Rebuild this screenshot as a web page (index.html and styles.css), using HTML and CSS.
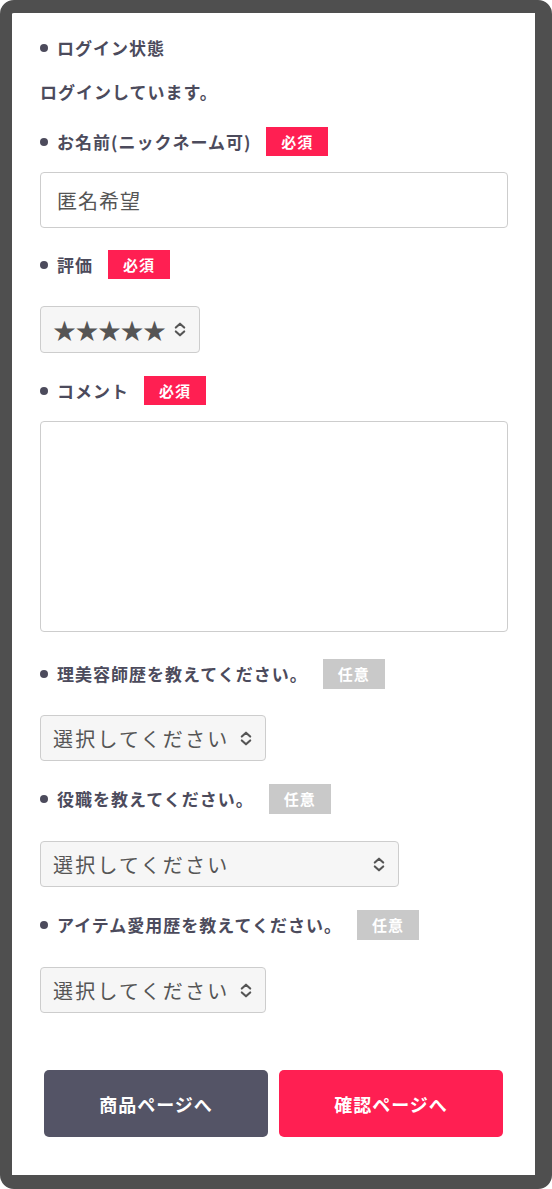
FILE: index.html
```html
<!DOCTYPE html>
<html lang="ja">
<head>
<meta charset="utf-8">
<title>レビュー投稿</title>
<link rel="stylesheet" href="styles.css">
</head>
<body>
<div class="frame">
  <form class="form">
    <div class="field field--info">
      <div class="label"><span class="dot"></span><span class="label-text">ログイン状態</span></div>
      <p class="status">ログインしています。</p>
    </div>

    <div class="field field--text">
      <div class="label"><span class="dot"></span><span class="label-text">お名前(ニックネーム可)</span><span class="badge badge--req">必須</span></div>
      <input class="input" type="text" value="匿名希望">
    </div>

    <div class="field field--select">
      <div class="label"><span class="dot"></span><span class="label-text">評価</span><span class="badge badge--req">必須</span></div>
      <div class="select select--stars"><span class="stars">★★★★★</span><svg class="chev" width="12" height="15" viewBox="0 0 12 15"><path d="M1.8 5.6 L6 1.7 L10.2 5.6 M1.8 9.4 L6 13.3 L10.2 9.4" fill="none" stroke="#555" stroke-width="2.1" stroke-linecap="round" stroke-linejoin="round"/></svg></div>
    </div>

    <div class="field field--text field--area">
      <div class="label"><span class="dot"></span><span class="label-text">コメント</span><span class="badge badge--req">必須</span></div>
      <textarea class="textarea"></textarea>
    </div>

    <div class="field field--select">
      <div class="label"><span class="dot"></span><span class="label-text">理美容師歴を教えてください。</span><span class="badge badge--opt">任意</span></div>
      <div class="select select--short"><span class="sel-text">選択してください</span><svg class="chev" width="12" height="15" viewBox="0 0 12 15"><path d="M1.8 5.6 L6 1.7 L10.2 5.6 M1.8 9.4 L6 13.3 L10.2 9.4" fill="none" stroke="#555" stroke-width="2.1" stroke-linecap="round" stroke-linejoin="round"/></svg></div>
    </div>

    <div class="field field--select">
      <div class="label"><span class="dot"></span><span class="label-text">役職を教えてください。</span><span class="badge badge--opt">任意</span></div>
      <div class="select select--wide"><span class="sel-text">選択してください</span><svg class="chev" width="12" height="15" viewBox="0 0 12 15"><path d="M1.8 5.6 L6 1.7 L10.2 5.6 M1.8 9.4 L6 13.3 L10.2 9.4" fill="none" stroke="#555" stroke-width="2.1" stroke-linecap="round" stroke-linejoin="round"/></svg></div>
    </div>

    <div class="field field--select field--last">
      <div class="label"><span class="dot"></span><span class="label-text">アイテム愛用歴を教えてください。</span><span class="badge badge--opt">任意</span></div>
      <div class="select select--short"><span class="sel-text">選択してください</span><svg class="chev" width="12" height="15" viewBox="0 0 12 15"><path d="M1.8 5.6 L6 1.7 L10.2 5.6 M1.8 9.4 L6 13.3 L10.2 9.4" fill="none" stroke="#555" stroke-width="2.1" stroke-linecap="round" stroke-linejoin="round"/></svg></div>
    </div>

    <div class="actions">
      <button type="button" class="btn btn--back">商品ページへ</button>
      <button type="button" class="btn btn--next">確認ページへ</button>
    </div>
  </form>
</div>
</body>
</html>
```

FILE: styles.css
```css
html, body {
  margin: 0;
  padding: 0;
  background: #ffffff;
}

body {
  font-family: "Noto Sans CJK JP", "Noto Sans", sans-serif;
  color: #4c4b5c;
}

.frame {
  box-sizing: border-box;
  width: 552px;
  height: 1189px;
  border-style: solid;
  border-color: #4f4f4f;
  border-width: 13px 17px 14px 12px;
  border-radius: 14px;
  background: #ffffff;
  padding: 20px 27px 0 28px;
}

.form {
  display: flex;
  flex-direction: column;
}

.field {
  display: flex;
  flex-direction: column;
  align-items: flex-start;
  margin-bottom: 23px;
}

.field--info {
  margin-bottom: 21px;
}

.field--text {
  margin-bottom: 22px;
}

.field--area {
  margin-bottom: 27px;
}

.field--last {
  margin-bottom: 57px;
}

.label {
  display: flex;
  align-items: center;
  height: 29px;
  font-size: 17px;
  font-weight: 700;
  letter-spacing: 1px;
  color: #4c4b5c;
}

.field--text .label {
  margin-bottom: 16px;
}

.field--select .label {
  margin-bottom: 27px;
}

.field--select + .field--select .label {
  margin-bottom: 28px;
}

.field--info .label {
  margin-bottom: 15px;
}

.dot {
  width: 8px;
  height: 8px;
  border-radius: 50%;
  background: #4c4b5c;
  margin-right: 9px;
  flex: none;
}

.label-text {
  white-space: nowrap;
}

.status {
  margin: 0;
  height: 29px;
  line-height: 29px;
  font-size: 17px;
  font-weight: 700;
  letter-spacing: 1px;
  color: #4c4b5c;
}

.badge {
  display: flex;
  align-items: center;
  justify-content: center;
  width: 62px;
  height: 29px;
  margin-left: 15px;
  font-size: 15px;
  font-weight: 700;
  letter-spacing: 1px;
  color: #ffffff;
  flex: none;
}

.badge--req {
  background: #ff1f52;
}

.badge--opt {
  background: #c9c9c9;
  height: 30px;
}

.input {
  box-sizing: border-box;
  width: 468px;
  height: 56px;
  margin: 0;
  padding: 0 16px;
  border: 1px solid #cdcdcd;
  border-radius: 4px;
  background: #ffffff;
  font-family: "Noto Sans CJK JP", sans-serif;
  font-size: 20px;
  letter-spacing: 1px;
  color: #555555;
  outline: none;
}

.textarea {
  display: block;
  box-sizing: border-box;
  width: 468px;
  height: 211px;
  margin: 0;
  padding: 10px 16px;
  border: 1px solid #cdcdcd;
  border-radius: 4px;
  background: #ffffff;
  resize: none;
  font-family: "Noto Sans CJK JP", sans-serif;
  font-size: 18px;
  outline: none;
}

.select {
  box-sizing: border-box;
  display: flex;
  align-items: center;
  justify-content: space-between;
  height: 46px;
  padding: 0 13px 0 12px;
  border: 1px solid #cdcdcd;
  border-radius: 4px;
  background: #f6f6f6;
  color: #555555;
}

.select--stars {
  width: 160px;
  height: 47px;
  padding-left: 12px;
}

.select--short {
  width: 226px;
}

.select--wide {
  width: 359px;
}

.stars {
  font-family: "Noto Sans CJK JP", sans-serif;
  font-size: 23px;
  line-height: 1;
  color: #555555;
  letter-spacing: -0.5px;
}

.sel-text {
  font-size: 20px;
  letter-spacing: 2.2px;
  color: #555555;
  white-space: nowrap;
}

.chev {
  display: block;
  flex: none;
}

.actions {
  display: grid;
  grid-template-columns: 224px 224px;
  column-gap: 11px;
  margin-left: 4px;
}

.btn {
  height: 67px;
  border: none;
  border-radius: 5px;
  font-family: "Noto Sans CJK JP", sans-serif;
  font-size: 18px;
  font-weight: 700;
  letter-spacing: 1px;
  color: #ffffff;
  cursor: pointer;
}

.btn--back {
  background: #545466;
}

.btn--next {
  background: #ff1f52;
}
```
